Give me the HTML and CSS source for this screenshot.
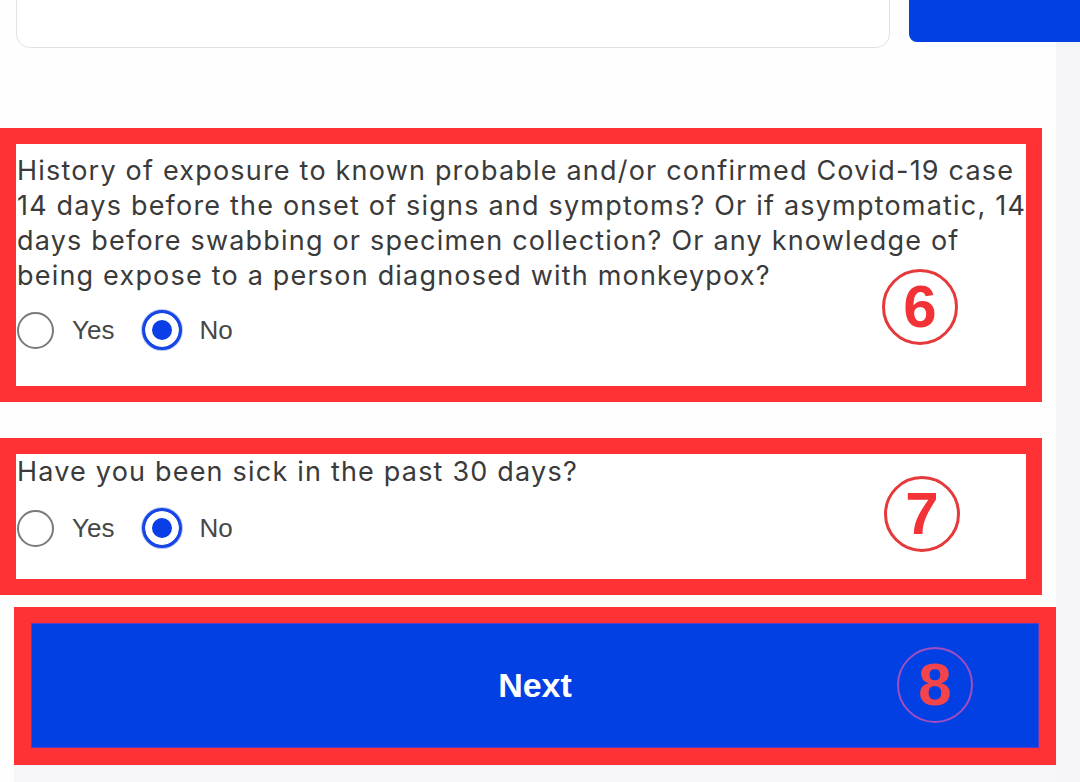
FILE: index.html
```html
<!DOCTYPE html>
<html lang="en">
<head>
<meta charset="utf-8">
<title>Health Declaration</title>
<link rel="stylesheet" href="styles.css">
</head>
<body>
<div class="page">
  <div class="top">
    <div class="input"></div>
    <div class="btn-top"></div>
  </div>

  <section class="q q6">
    <p class="qtext">History of exposure to known probable and/or confirmed Covid-19 case<br>14 days before the onset of signs and symptoms? Or if asymptomatic, 14<br>days before swabbing or specimen collection? Or any knowledge of<br>being expose to a person diagnosed with monkeypox?</p>
    <div class="radios">
      <span class="radio"></span><span class="lbl">Yes</span>
      <span class="radio on"></span><span class="lbl">No</span>
    </div>
    <span class="badge b6">6</span>
  </section>

  <section class="q q7">
    <p class="qtext">Have you been sick in the past 30 days?</p>
    <div class="radios">
      <span class="radio"></span><span class="lbl">Yes</span>
      <span class="radio on"></span><span class="lbl">No</span>
    </div>
    <span class="badge b7">7</span>
  </section>

  <div class="next-wrap">
    <div class="next">Next<span class="badge b8">8</span></div>
  </div>
  <div class="footer"></div>
</div>
</body>
</html>
```

FILE: styles.css
```css
* { box-sizing: border-box; }
html, body { margin: 0; padding: 0; }
body {
  width: 1080px;
  height: 782px;
  overflow: hidden;
  background: linear-gradient(to right, #fefefe 1056px, #f5f5f7 1056px);
  font-family: "Inter", "Liberation Sans", sans-serif;
}
.page { width: 1080px; }

.top {
  height: 48px;
  display: flex;
  align-items: flex-end;
  overflow: hidden;
  padding-left: 16px;
}
.input {
  width: 874px;
  height: 100px;
  background: #fff;
  border: 1.5px solid #e2e2e4;
  border-radius: 14px;
}
.btn-top {
  flex: 1;
  margin-left: 19px;
  height: 94px;
  margin-bottom: 6px;
  background: #0340e3;
  border-radius: 0 0 0 8px;
}

.q {
  position: relative;
  width: 1042px;
  border: 16px solid #fe3134;
  background: #fff;
}
.q6 { margin-top: 80px; height: 274px; padding: 9px 0 0 1px; }
.q7 { margin-top: 36px; height: 157px; padding: 0 0 0 1px; }

.qtext {
  margin: 0;
  font-family: "Inter", sans-serif;
  font-size: 27px;
  letter-spacing: 1.2px;
  line-height: 35px;
  color: #3a3a3a;
  white-space: nowrap;
}

.radios {
  display: flex;
  align-items: center;
  height: 40px;
  margin-top: 17px;
  font-family: "Liberation Sans", Arial, sans-serif;
  font-size: 26px;
  color: #474747;
}
.q7 .radios { margin-top: 19px; }
.radio {
  width: 37px;
  height: 37px;
  border: 2px solid #7a7a7a;
  border-radius: 50%;
  background: #fff;
  flex: none;
}
.radio.on {
  width: 40px;
  height: 40px;
  border: 3px solid #1646e6;
  background: #0a3ee6;
  box-shadow: inset 0 0 0 7px #fff, 0 0 0 1px #b8c6f4;
}
.lbl { margin-left: 18px; margin-right: 28px; }
.radio.on + .lbl { margin-left: 17px; }

.badge {
  position: absolute;
  width: 76px;
  height: 76px;
  border: 3px solid #e6393c;
  border-radius: 50%;
  display: flex;
  align-items: center;
  justify-content: center;
  font-family: "Liberation Sans", Arial, sans-serif;
  font-weight: bold;
  font-size: 60px;
  line-height: 1;
  color: #f23236;
}
.b6 { left: 866px; top: 125px; }
.b7 { left: 868px; top: 22px; }
.b8 {
  left: 866px;
  top: 24px;
  border: 2.5px solid #a14ec0;
  font-size: 60px;
  color: #f2444a;
}

.next-wrap {
  margin: 12px 0 0 14px;
  width: 1042px;
  border-style: solid;
  border-color: #fe3134;
  border-width: 16px 17px 17px 17px;
}
.next {
  position: relative;
  height: 125px;
  background: #0340e3;
  box-shadow: inset 0 0 0 1px #5a3cc0;
  color: #fff;
  display: flex;
  align-items: center;
  justify-content: center;
  font-family: "Liberation Sans", Arial, sans-serif;
  font-weight: bold;
  font-size: 34px;
}

.footer {
  margin-left: 14px;
  width: 1042px;
  height: 20px;
  background: #f7f7fb;
}
```
